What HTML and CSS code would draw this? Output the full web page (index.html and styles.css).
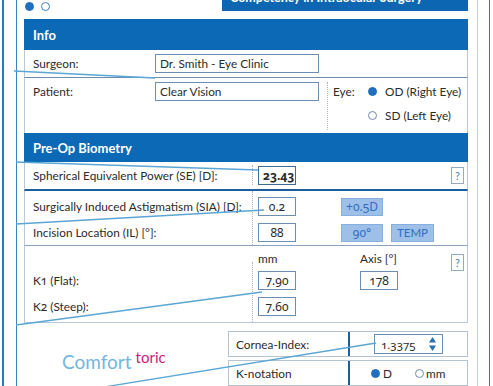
FILE: index.html
```html
<!DOCTYPE html>
<html lang="en">
<head>
    <meta charset="UTF-8">
    <title>Comfort toric</title>
    <link rel="stylesheet" href="styles.css">
</head>
<body>
    <div class="rail">
        <div class="rail-inner">
            <div class="top">
                <div class="dots"><span class="dot on"></span><span class="dot"></span></div>
                <div class="brand"><span>Competency in Intraocular Surgery</span></div>
            </div>

            <!-- Info -->
            <h2 class="bar">Info</h2>
            <div class="row surgeon">
                <span class="lbl">Surgeon:</span>
                <span class="field wide">Dr. Smith - Eye Clinic</span>
            </div>
            <div class="row patient">
                <span class="lbl">Patient:</span>
                <span class="field wide">Clear Vision</span>
                <div class="eye">
                    <span class="eye-lbl">Eye:</span>
                    <div class="eye-opts">
                        <span class="opt"><i class="radio on"></i>OD (Right Eye)</span>
                        <span class="opt"><i class="radio"></i>SD (Left Eye)</span>
                    </div>
                </div>
            </div>

            <!-- Pre-Op Biometry -->
            <h2 class="bar short">Pre-Op Biometry</h2>
            <div class="row se">
                <span class="lbl-col">Spherical Equivalent Power (SE) [D]:</span>
                <div class="val-col"><span class="field num strong">23.43</span></div>
                <span class="help">?</span>
            </div>
            <div class="row sia">
                <div class="lbl-col">
                    <span>Surgically Induced Astigmatism (SIA) [D]:</span>
                    <span>Incision Location (IL) [°]:</span>
                </div>
                <div class="val-col">
                    <span class="field num">0.2</span>
                    <span class="field num">88</span>
                </div>
                <div class="btn-col">
                    <div class="btns"><span class="btn">+0.5D</span></div>
                    <div class="btns"><span class="btn">90°</span><span class="btn temp">TEMP</span></div>
                </div>
            </div>
            <div class="row k">
                <div class="lbl-col">
                    <span>K<span class="onum">1</span> (Flat):</span>
                    <span>K<span class="onum">2</span> (Steep):</span>
                </div>
                <div class="val-col">
                    <span class="col-head">mm</span>
                    <span class="field num">7.90</span>
                    <span class="field num">7.60</span>
                </div>
                <div class="val-col axis">
                    <span class="col-head">Axis [°]</span>
                    <span class="field num">178</span>
                </div>
                <span class="help">?</span>
            </div>

            <div class="bottom">
                <div class="logo"><span class="comfort">Comfort</span><span class="toric">toric</span></div>
                <div class="settings">
                    <div class="set-row">
                        <span class="set-lbl">Cornea-Index:</span>
                        <span class="divider"></span>
                        <span class="set-val">
                            <span class="spin"><span class="onum">1.3375</span>
                                <svg width="7" height="14" viewBox="0 0 7 14"><path d="M3.5 0 L7 5.5 H0 Z M0 8.5 H7 L3.5 14 Z" fill="#2a6fb8"/></svg>
                            </span>
                        </span>
                    </div>
                    <div class="set-row">
                        <span class="set-lbl">K-notation</span>
                        <span class="divider"></span>
                        <span class="set-val notation">
                            <i class="radio on"></i>D
                            <i class="radio gap"></i>mm
                        </span>
                    </div>
                </div>
            </div>
        </div>
    </div>

    <!-- Hinweislinien über dem Formular -->
    <svg class="callouts" width="493" height="386" viewBox="0 0 493 386">
        <g stroke="#5aa6d4" stroke-width="1.3" fill="none">
            <line x1="14" y1="71" x2="155" y2="78"/>
            <line x1="16" y1="162" x2="258" y2="170"/>
            <line x1="16" y1="224" x2="264" y2="210"/>
            <line x1="16" y1="325" x2="262" y2="292"/>
            <line x1="104" y1="387" x2="376" y2="343"/>
        </g>
    </svg>
</body>
</html>
```

FILE: styles.css
```css
* {
    box-sizing: border-box;
}

body {
    margin: 0;
    width: 493px;
    height: 386px;
    overflow: hidden;
    position: relative;
    background: #fff;
    color: #2b2b2b;
    font-family: Lato, "Liberation Sans", sans-serif;
    font-size: 11.8px;
}

.onum {
    font-family: "Noto Sans", Lato, sans-serif;
    font-variant-numeric: oldstyle-nums;
}

.rail {
    height: 386px;
    margin: 0 3px 0 2px;
    border-left: 2px solid #2a78bd;
    border-right: 1px solid #2a78bd;
    padding: 0 11px 0 12px;
}

.rail-inner {
    height: 100%;
    border-left: 1px solid #3a84c4;
    border-right: 1px solid #c3cfdb;
    padding: 0 9px 0 7px;
}

/* Kopfzeile */
.top {
    height: 19px;
    display: flex;
    justify-content: space-between;
}

.dots {
    display: flex;
    gap: 7px;
    padding: 2px 0 0 1px;
}

.dot {
    width: 9px;
    height: 9px;
    border-radius: 50%;
    border: 1px solid #3a7fc0;
}

.dot.on {
    background: #1e6fbd;
    border-color: #1e6fbd;
}

.brand {
    width: 246px;
    height: 11px;
    background: #0c66b2;
    color: #fff;
    font-weight: 700;
    font-size: 12.5px;
    line-height: 12px;
    padding-left: 8px;
    overflow: hidden;
}

.brand span {
    display: block;
    margin-top: -8px;
}

.bar {
    margin: 0;
    height: 31px;
    background: #0b69b5;
    color: #fff;
    font-size: 13px;
    font-weight: 700;
    padding-left: 9px;
    display: flex;
    align-items: center;
}

.bar.short {
    height: 29px;
}

.row {
    display: flex;
    border-left: 1px solid #b9c8d6;
    border-right: 1px solid #b9c8d6;
    padding-left: 8px;
}

.lbl {
    width: 122px;
    line-height: 19px;
}

.field {
    display: block;
    height: 19px;
    width: 38px;
    border: 1px solid #6a8fb3;
    padding: 0 4px;
    line-height: 17px;
    background: #fff;
}

.field.wide {
    width: 164px;
}

.field.num {
    text-align: center;
    font-family: "Noto Sans", Lato, sans-serif;
    font-size: 12px;
    font-variant-numeric: oldstyle-nums;
}

.field.strong {
    font-weight: 700;
    border-color: #3f6b95;
}

.surgeon {
    height: 28px;
    padding-top: 4px;
    border-bottom: 1px solid #6f8db0;
}

.patient {
    height: 55px;
    padding-top: 4px;
}

.eye {
    display: flex;
    margin-left: 8px;
    padding-left: 5px;
    border-left: 1px dotted #aab4be;
    height: 48px;
}

.eye-lbl {
    width: 35px;
    line-height: 19px;
}

.eye-opts {
    display: flex;
    flex-direction: column;
    gap: 5px;
}

.opt {
    display: flex;
    align-items: center;
    line-height: 19px;
}

.radio {
    display: inline-block;
    width: 9px;
    height: 9px;
    border-radius: 50%;
    border: 1px solid #6f8db0;
    margin-right: 8px;
}

.radio.on {
    background: #1e6fbd;
    border-color: #1e6fbd;
}

/* Biometrie */
.lbl-col {
    width: 220px;
    border-right: 1px dotted #aab4be;
}

.val-col {
    display: flex;
    flex-direction: column;
    padding-left: 5px;
}

.help {
    margin-left: auto;
    margin-right: 3px;
    width: 13px;
    height: 17px;
    border: 1px solid #93abc4;
    color: #4a7fb0;
    font-size: 11px;
    line-height: 15px;
    text-align: center;
}

.se {
    height: 29px;
    align-items: center;
    border-bottom: 2px solid #1b5f9f;
}

.se .lbl-col {
    align-self: stretch;
    display: flex;
    align-items: center;
    margin: 3px 0 4px;
}

.sia {
    height: 55px;
    border-bottom: 1px solid #8aa3bd;
}

.sia .lbl-col,
.k .lbl-col {
    display: flex;
    flex-direction: column;
    gap: 7px;
    padding-top: 6px;
}

.sia .lbl-col span,
.k .lbl-col > span {
    line-height: 19px;
}

.sia .val-col {
    gap: 7px;
    padding-top: 6px;
}

.btn-col {
    display: flex;
    flex-direction: column;
    gap: 8px;
    padding: 7px 0 0 45px;
}

.btns {
    display: flex;
    gap: 8px;
}

.btn {
    width: 42px;
    height: 18px;
    background: #9dbfe8;
    border: 1px solid #86aedf;
    color: #2e6fc0;
    font-family: "Noto Sans", Lato, sans-serif;
    font-size: 12px;
    line-height: 16px;
    text-align: center;
    font-variant-numeric: oldstyle-nums;
}

.btn.temp {
    width: 43px;
    font-family: Lato, sans-serif;
    font-size: 11.5px;
}

.k {
    height: 77px;
    border-bottom: 1px solid #b9c8d6;
}

.k .lbl-col {
    margin-top: 16px;
    padding-top: 9px;
    height: 60px;
}

.k .val-col {
    gap: 7px;
}

.col-head {
    line-height: 14px;
    margin: 6px 0 -2px;
}

.k .val-col.axis {
    margin-left: 59px;
}

.k .help {
    margin-top: 8px;
}

/* Unterer Bereich */
.bottom {
    display: flex;
    margin-top: 8px;
}

.logo {
    width: 204px;
    padding: 17px 0 0 38px;
    white-space: nowrap;
}

.comfort {
    font-size: 19px;
    line-height: 20px;
    color: #74b6dc;
}

.toric {
    font-size: 15px;
    color: #c8237a;
    margin-left: 4px;
    vertical-align: 6px;
}

.settings {
    width: 240px;
}

.set-row {
    display: grid;
    grid-template-columns: 119px 2px 1fr;
    height: 26px;
    border: 1px solid #b5c4d3;
    margin-bottom: 3px;
    align-items: center;
}

.set-lbl {
    padding-left: 7px;
}

.divider {
    align-self: stretch;
    background: #1b5f9f;
}

.set-val {
    padding-left: 24px;
}

.spin {
    width: 69px;
    height: 20px;
    border: 1px solid #6a8fb3;
    padding: 0 6px;
    display: flex;
    align-items: center;
    justify-content: space-between;
    font-size: 11.5px;
}

.notation {
    display: flex;
    align-items: center;
    padding-left: 21px;
}

.notation .radio {
    margin-right: 3px;
}

.notation .radio.gap {
    margin-left: 23px;
    margin-right: 2px;
}

.callouts {
    position: absolute;
    top: 0;
    left: 0;
    pointer-events: none;
}
```
